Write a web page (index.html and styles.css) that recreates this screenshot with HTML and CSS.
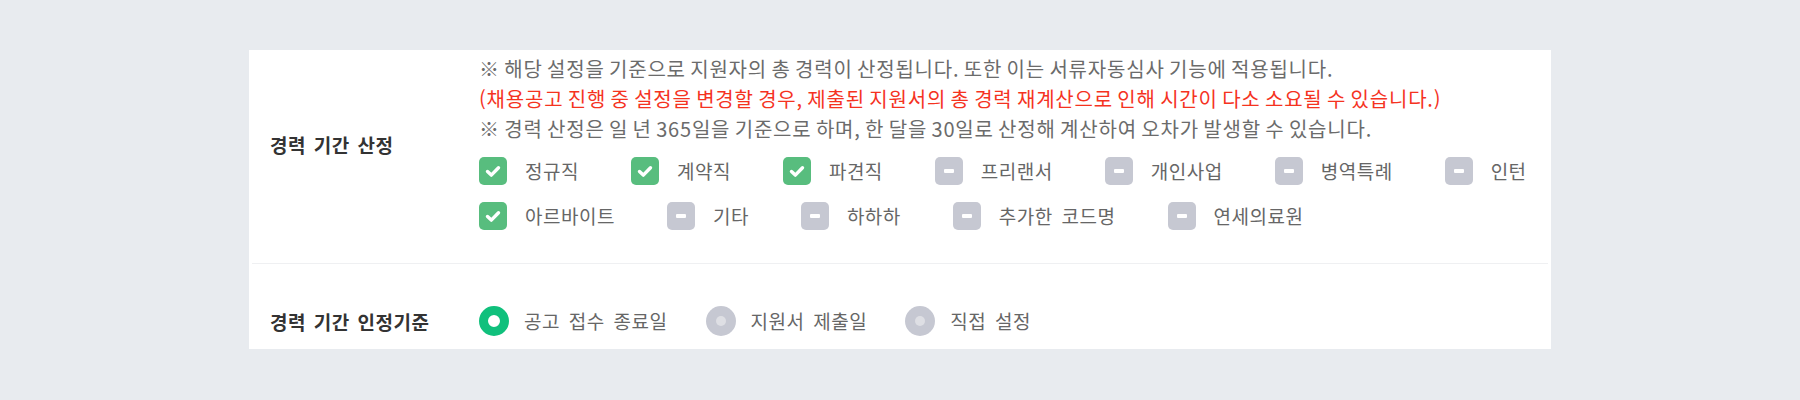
FILE: index.html
```html
<!DOCTYPE html>
<html lang="ko">
<head>
<meta charset="utf-8">
<link rel="stylesheet" href="styles.css">
</head>
<body>
<div class="card">
  <div class="row row-period">
    <div class="label">경력 기간 산정</div>
    <div class="content">
      <p class="note">※ 해당 설정을 기준으로 지원자의 총 경력이 산정됩니다. 또한 이는 서류자동심사 기능에 적용됩니다.</p>
      <p class="note warn">(채용공고 진행 중 설정을 변경할 경우, 제출된 지원서의 총 경력 재계산으로 인해 시간이 다소 소요될 수 있습니다.)</p>
      <p class="note">※ 경력 산정은 일 년 365일을 기준으로 하며, 한 달을 30일로 산정해 계산하여 오차가 발생할 수 있습니다.</p>
      <div class="checks">
        <label class="check"><span class="box on"><svg viewBox="0 0 28 28"><path d="M8.5 14.5l3.8 3.6 7.2-7.4"/></svg></span>정규직</label>
        <label class="check"><span class="box on"><svg viewBox="0 0 28 28"><path d="M8.5 14.5l3.8 3.6 7.2-7.4"/></svg></span>계약직</label>
        <label class="check"><span class="box on"><svg viewBox="0 0 28 28"><path d="M8.5 14.5l3.8 3.6 7.2-7.4"/></svg></span>파견직</label>
        <label class="check"><span class="box off"><i class="bar"></i></span>프리랜서</label>
        <label class="check"><span class="box off"><i class="bar"></i></span>개인사업</label>
        <label class="check"><span class="box off"><i class="bar"></i></span>병역특례</label>
        <label class="check"><span class="box off"><i class="bar"></i></span>인턴</label>
        <label class="check"><span class="box on"><svg viewBox="0 0 28 28"><path d="M8.5 14.5l3.8 3.6 7.2-7.4"/></svg></span>아르바이트</label>
        <label class="check"><span class="box off"><i class="bar"></i></span>기타</label>
        <label class="check"><span class="box off"><i class="bar"></i></span>하하하</label>
        <label class="check"><span class="box off"><i class="bar"></i></span>추가한 코드명</label>
        <label class="check"><span class="box off"><i class="bar"></i></span>연세의료원</label>
      </div>
    </div>
  </div>
  <div class="divider"></div>
  <div class="row row-basis">
    <div class="label">경력 기간 인정기준</div>
    <div class="radios">
      <label class="radio"><span class="dot on"></span>공고 접수 종료일</label>
      <label class="radio"><span class="dot off"></span>지원서 제출일</label>
      <label class="radio"><span class="dot off"></span>직접 설정</label>
    </div>
  </div>
</div>
</body>
</html>
```

FILE: styles.css
```css
* { box-sizing: border-box; }
html, body { margin: 0; padding: 0; }
body {
  background: #e8ebef;
  font-family: "Noto Sans CJK KR", "Noto Sans", sans-serif;
  color: #666;
  padding-top: 50px;
}
.card {
  width: 1302px;
  margin: 0 auto;
  background: #fff;
  height: 299px;
}
.row {
  display: flex;
  align-items: center;
}
.row-period { padding-bottom: 25px; }
.label {
  width: 230px;
  flex: none;
  padding-left: 21px;
  font-size: 19px;
  font-weight: 700;
  color: #333;
  letter-spacing: 0.5px;
  word-spacing: 2px;
}
.content {
  flex: 1;
  padding: 4px 0 8px 0;
}
.note {
  margin: 0;
  font-size: 20px;
  line-height: 30px;
  color: #6b6b6b;
  letter-spacing: 0.8px;
  word-spacing: -2px;
  white-space: nowrap;
}
.note.warn { color: #f5331f; }
.checks {
  display: flex;
  flex-wrap: wrap;
  column-gap: 52px;
  row-gap: 17px;
  margin-top: 13px;
}
.check, .radio {
  display: flex;
  align-items: center;
  font-size: 19px;
  line-height: 28px;
  color: #666;
  letter-spacing: 0.5px;
  word-spacing: 3px;
}
.box {
  width: 28px;
  height: 28px;
  border-radius: 5px;
  margin-right: 18px;
  display: flex;
  align-items: center;
  justify-content: center;
  flex: none;
}
.box.on { background: #58bd7e; }
.box.off { background: #c6c8d2; }
.box svg { width: 28px; height: 28px; }
.box path {
  fill: none;
  stroke: #fff;
  stroke-width: 3.4;
  stroke-linecap: round;
  stroke-linejoin: round;
}
.bar {
  width: 10px;
  height: 4px;
  border-radius: 1px;
  background: #fff;
}
.row-basis {
  padding-top: 42px;
}
.divider {
  height: 1px;
  background: #eff0f2;
  margin: 0 3px;
}
.radios {
  display: flex;
  column-gap: 38px;
}
.dot {
  width: 30px;
  height: 30px;
  border-radius: 50%;
  margin-right: 15px;
  flex: none;
  display: flex;
  align-items: center;
  justify-content: center;
}
.dot.on { background: #fff; border: 9px solid #10c07c; }
.dot.off { background: #c6c8d2; }
.dot.off::after {
  content: "";
  width: 10px;
  height: 10px;
  border-radius: 50%;
  background: #dedfe4;
}
```
